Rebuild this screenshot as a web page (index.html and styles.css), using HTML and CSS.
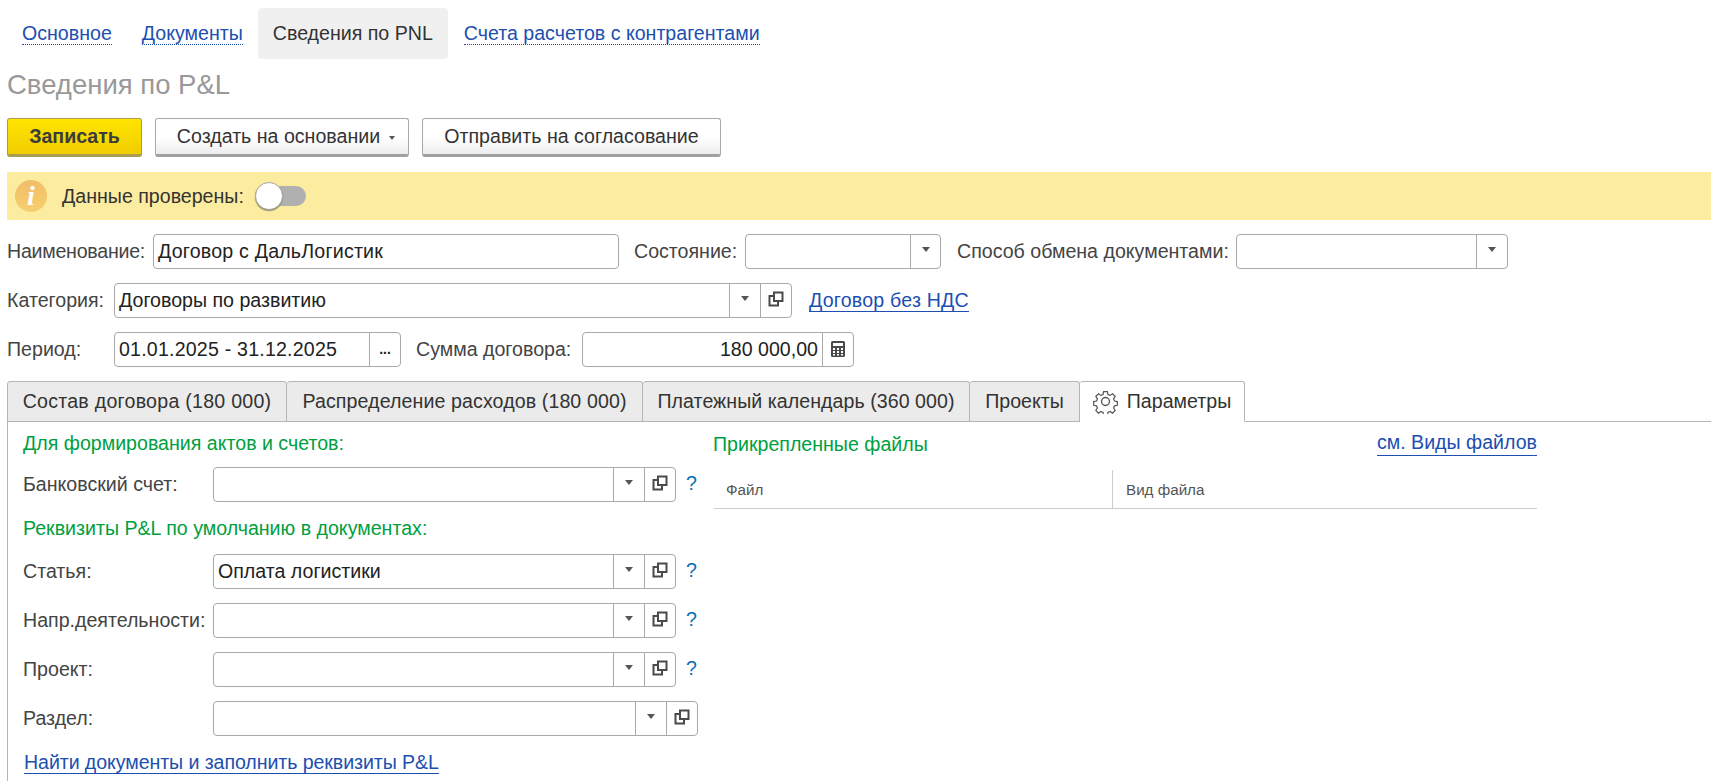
FILE: index.html
```html
<!DOCTYPE html>
<html lang="ru">
<head>
    <meta charset="UTF-8">
    <title>Сведения по P&amp;L</title>
    <link rel="stylesheet" href="styles.css">
</head>
<body>

    <svg class="defs" width="0" height="0">
        <symbol id="copy" viewBox="0 0 16 16">
            <path d="M6 1.500h8.500v8.500H6z M6 5H1.500v9.500H10V10" fill="none" stroke="#4a4a4a" stroke-width="2"/>
        </symbol>
    </svg>

    <!-- Top navigation -->
    <div class="nav">
        <a class="nav-link" href="#">Основное</a>
        <a class="nav-link" href="#">Документы</a>
        <span class="nav-current">Сведения по PNL</span>
        <a class="nav-link" href="#">Счета расчетов с контрагентами</a>
    </div>

    <h1 class="title">Сведения по P&amp;L</h1>

    <!-- Command bar -->
    <div class="toolbar">
        <button class="btn btn-main">Записать</button>
        <button class="btn btn-create">Создать на основании<i class="btn-arrow"></i></button>
        <button class="btn btn-send">Отправить на согласование</button>
    </div>

    <!-- Notice -->
    <div class="notice">
        <span class="info-icon">i</span>
        <span class="notice-text">Данные проверены:</span>
        <span class="switch"><span class="switch-knob"></span></span>
    </div>

    <!-- Header fields -->
    <div class="row">
        <label class="label w-name">Наименование:</label>
        <div class="field f-name"><span class="value wide-text">Договор с ДальЛогистик</span></div>
        <label class="label w-state">Состояние:</label>
        <div class="field f-state"><span class="value"></span><span class="field-btn"><i class="arrow"></i></span></div>
        <label class="label w-way">Способ обмена документами:</label>
        <div class="field f-way"><span class="value"></span><span class="field-btn"><i class="arrow"></i></span></div>
    </div>

    <div class="row">
        <label class="label w-short">Категория:</label>
        <div class="field f-cat">
            <span class="value">Договоры по развитию</span>
            <span class="field-btn"><i class="arrow"></i></span>
            <span class="field-btn"><svg class="copy-icon"><use href="#copy"/></svg></span>
        </div>
        <a class="link link-vat" href="#">Договор без НДС</a>
    </div>

    <div class="row">
        <label class="label w-short">Период:</label>
        <div class="field f-period">
            <span class="value wide-text">01.01.2025 - 31.12.2025</span>
            <span class="field-btn dots">...</span>
        </div>
        <label class="label w-sum">Сумма договора:</label>
        <div class="field f-sum">
            <span class="value value-right">180 000,00</span>
            <span class="field-btn">
                <svg class="calc-icon" viewBox="0 0 14 16">
                    <rect x="0" y="0" width="14" height="16" rx="1.500" fill="#4a4a4a"/>
                    <rect x="2" y="2" width="10" height="3" fill="#fff"/>
                    <path d="M2 7h2v2H2zM6 7h2v2H6zM10 7h2v2h-2zM2 10h2v2H2zM6 10h2v2H6zM10 10h2v2h-2zM2 13h2v1.500H2zM6 13h2v1.500H6zM10 13h2v1.500h-2z" fill="#fff"/>
                </svg>
            </span>
        </div>
    </div>

    <!-- Tabs -->
    <div class="tabs">
        <div class="tab t1">Состав договора (180 000)</div>
        <div class="tab t2">Распределение расходов (180 000)</div>
        <div class="tab t3">Платежный календарь (360 000)</div>
        <div class="tab t4">Проекты</div>
        <div class="tab tab-active">
            <svg class="gear-icon" viewBox="0 0 24 24">
                <path d="M10 1.500h4l.6 3 2.300 1 2.600-1.700 2.800 2.800-1.700 2.600 1 2.300 3 .6v4l-3 .6-1 2.300 1.700 2.600-2.800 2.800-2.600-1.700-2.300 1-.6 3h-4l-.6-3-2.300-1-2.600 1.700-2.800-2.800 1.700-2.600-1-2.300-3-.6v-4l3-.6 1-2.300-1.700-2.600 2.800-2.800 2.600 1.700 2.300-1z" transform="translate(1.200 1.200) scale(.9)" fill="none" stroke="#555" stroke-width="1.300"/>
                <circle cx="12" cy="12" r="3.800" fill="none" stroke="#555" stroke-width="1.300"/>
            </svg>
            Параметры
        </div>
    </div>

    <div class="panel">
        <div class="panel-left">
            <div class="group-title first">Для формирования актов и счетов:</div>
            <div class="row row-inner">
                <label class="label w-inner">Банковский счет:</label>
                <div class="field f-inner"><span class="value"></span><span class="field-btn"><i class="arrow"></i></span><span class="field-btn"><svg class="copy-icon"><use href="#copy"/></svg></span></div>
                <a class="hint" href="#">?</a>
            </div>

            <div class="group-title">Реквизиты P&amp;L по умолчанию в документах:</div>
            <div class="row row-inner">
                <label class="label w-inner">Статья:</label>
                <div class="field f-inner"><span class="value">Оплата логистики</span><span class="field-btn"><i class="arrow"></i></span><span class="field-btn"><svg class="copy-icon"><use href="#copy"/></svg></span></div>
                <a class="hint" href="#">?</a>
            </div>
            <div class="row row-inner">
                <label class="label w-inner">Напр.деятельности:</label>
                <div class="field f-inner"><span class="value"></span><span class="field-btn"><i class="arrow"></i></span><span class="field-btn"><svg class="copy-icon"><use href="#copy"/></svg></span></div>
                <a class="hint" href="#">?</a>
            </div>
            <div class="row row-inner">
                <label class="label w-inner">Проект:</label>
                <div class="field f-inner"><span class="value"></span><span class="field-btn"><i class="arrow"></i></span><span class="field-btn"><svg class="copy-icon"><use href="#copy"/></svg></span></div>
                <a class="hint" href="#">?</a>
            </div>
            <div class="row row-inner">
                <label class="label w-inner">Раздел:</label>
                <div class="field f-wide"><span class="value"></span><span class="field-btn"><i class="arrow"></i></span><span class="field-btn"><svg class="copy-icon"><use href="#copy"/></svg></span></div>
            </div>

            <a class="link link-find" href="#">Найти документы и заполнить реквизиты P&amp;L</a>
        </div>

        <div class="panel-right">
            <div class="files-head">
                <span class="group-title-text">Прикрепленные файлы</span>
                <a class="link" href="#">см. Виды файлов</a>
            </div>
            <div class="table-head">
                <div class="th th-file">Файл</div>
                <div class="th th-kind">Вид файла</div>
            </div>
        </div>
    </div>

</body>
</html>
```

FILE: styles.css
```css
/* General Reset */
* {
    margin: 0;
    padding: 0;
    box-sizing: border-box;
}

body {
    font-family: "Liberation Sans", Arial, sans-serif;
    font-size: 19.6px;
    color: #333;
    background: #fff;
    padding-left: 7px;
    overflow: hidden;
}

.defs {
    position: absolute;
}

/* Top navigation */
.nav {
    display: flex;
    align-items: center;
    height: 51px;
    margin-top: 8px;
    padding-left: 15px;
}

.nav-link {
    color: #1c4fb0;
    text-decoration: none;
    border-bottom: 1px dotted #1c4fb0;
    line-height: 21px;
    margin-top: 1px;
    margin-right: 30px;
}

.nav-current {
    display: flex;
    align-items: center;
    height: 51px;
    padding: 0 15px;
    margin: 0 16px 0 -15px;
    background: #f0f0f0;
    border-radius: 4px;
}

.title {
    font-size: 27.5px;
    font-weight: normal;
    color: #999;
    line-height: 30px;
    margin-top: 11px;
}

/* Command bar */
.toolbar {
    display: flex;
    margin-top: 18px;
}

.btn {
    height: 39px;
    font: inherit;
    color: #333;
    border: 1px solid #a9a9a9;
    border-bottom: 3px solid #a0a0a0;
    border-radius: 3px;
    background: linear-gradient(#fff 55%, #ececec);
    margin-right: 13px;
}

.btn-main {
    width: 135px;
    font-weight: bold;
    background: linear-gradient(#ffe500, #f0cc00);
    border-color: #a89c50;
    color: #3c3c3c;
}

.btn-create {
    width: 254px;
    padding-left: 8px;
}

.btn-send {
    width: 299px;
}

.btn-arrow {
    display: inline-block;
    margin-left: 9px;
    vertical-align: middle;
    border: 3px solid transparent;
    border-top: 4px solid #555;
    border-bottom: 0;
}

/* Notice */
.notice {
    display: flex;
    align-items: center;
    height: 48px;
    margin-top: 15px;
    background: #fbeca0;
    padding-left: 8px;
}

.info-icon {
    width: 32px;
    height: 32px;
    border-radius: 50%;
    background: linear-gradient(#f2bd68, #f5d070);
    color: #fff;
    font: italic bold 28px/32px "Liberation Serif", serif;
    text-align: center;
}

.notice-text {
    margin-left: 15px;
}

.switch {
    display: block;
    position: relative;
    width: 51px;
    height: 20px;
    margin-left: 11px;
    border-radius: 10px;
    background: #b0b0b0;
}

.switch-knob {
    position: absolute;
    left: 0;
    top: -4px;
    width: 28px;
    height: 28px;
    border-radius: 50%;
    background: #fff;
    border: 1px solid #a8a8a0;
    box-shadow: 0 1px 1px #8a8a70;
}

/* Form rows */
.row {
    display: flex;
    align-items: center;
    height: 35px;
    margin-top: 14px;
}

.label {
    flex: none;
    color: #444;
    white-space: nowrap;
}

.w-name { width: 146px; letter-spacing: -0.25px; }
.w-state { width: 111px; margin-left: 15px; }
.w-way { width: 279px; margin-left: 16px; }
.w-short { width: 107px; }
.w-sum { width: 166px; margin-left: 15px; }
.w-inner { width: 190px; }

.field {
    display: flex;
    flex: none;
    height: 35px;
    border: 1px solid #a9a9a9;
    border-radius: 4px;
    background: #fff;
    color: #222;
}

.value {
    flex: 1;
    min-width: 0;
    padding-left: 4px;
    line-height: 33px;
    white-space: nowrap;
}

.wide-text {
    letter-spacing: 0.2px;
}

.value-right {
    text-align: right;
    padding-right: 4px;
}

.field-btn {
    display: flex;
    flex: none;
    align-items: center;
    justify-content: center;
    width: 31px;
    border-left: 1px solid #a9a9a9;
}

.dots {
    font-weight: bold;
    font-size: 14px;
    padding-bottom: 2px;
}

.arrow {
    display: block;
    margin-bottom: 4px;
    border: 4px solid transparent;
    border-top: 5px solid #555;
    border-bottom: 0;
}

.copy-icon {
    width: 16px;
    height: 16px;
    margin-bottom: 3px;
}

.calc-icon {
    width: 14px;
    height: 16px;
    margin-bottom: 2px;
}

.f-name { width: 466px; }
.f-state { width: 196px; }
.f-state .field-btn { width: 30px; }
.f-way { width: 272px; }
.f-cat { width: 678px; }
.f-period { width: 287px; }
.f-sum { width: 272px; }
.f-inner { width: 463px; }
.f-wide { width: 485px; }

.link {
    color: #1c4fb0;
    text-decoration: none;
    border-bottom: 1px solid #1c4fb0;
    line-height: 21px;
}

.link-vat {
    margin-left: 17px;
    letter-spacing: 0.2px;
}

.hint {
    margin-left: 10px;
    color: #0a6fb8;
    text-decoration: none;
    margin-bottom: 2px;
}

/* Tabs */
.tabs {
    display: flex;
    height: 41px;
    margin-top: 14px;
    border-bottom: 1px solid #b5b5b5;
}

.tab {
    display: flex;
    align-items: center;
    justify-content: center;
    height: 41px;
    background: #ebebeb;
    border: 1px solid #b5b5b5;
    border-left-width: 0;
    border-radius: 3px 3px 0 0;
}

.t1 { width: 280px; border-left-width: 1px; letter-spacing: 0.25px; }
.t2 { width: 356px; letter-spacing: 0.1px; }
.t3 { width: 327px; letter-spacing: 0.05px; }
.t4 { width: 110px; }

.tab-active {
    width: 165px;
    background: #fff;
    border-bottom-color: #fff;
}

.gear-icon {
    width: 25px;
    height: 25px;
    margin-right: 9px;
}

/* Tab body */
.panel {
    display: flex;
    height: 360px;
    border-left: 1px solid #b5b5b5;
}

.panel-left {
    flex: none;
    width: 705px;
    padding-left: 15px;
}

.group-title,
.group-title-text {
    color: #00a040;
    line-height: 24px;
}

.group-title {
    margin-top: 14px;
}

.group-title.first {
    margin-top: 9px;
    margin-bottom: -2px;
}

.link-find {
    display: inline-block;
    margin-top: 16px;
    margin-left: 1px;
    letter-spacing: -0.08px;
}

.panel-right {
    flex: none;
    width: 824px;
    padding-top: 10px;
}

.files-head {
    display: flex;
    justify-content: space-between;
}

.table-head {
    display: flex;
    height: 39px;
    margin-top: 14px;
    margin-left: 1px;
    border-bottom: 1px solid #ccc;
    font-size: 15.2px;
    color: #555;
}

.th {
    display: flex;
    align-items: center;
}

.th-file {
    width: 399px;
    padding-left: 12px;
    border-right: 1px solid #ccc;
}

.th-kind {
    padding-left: 13px;
}
```
